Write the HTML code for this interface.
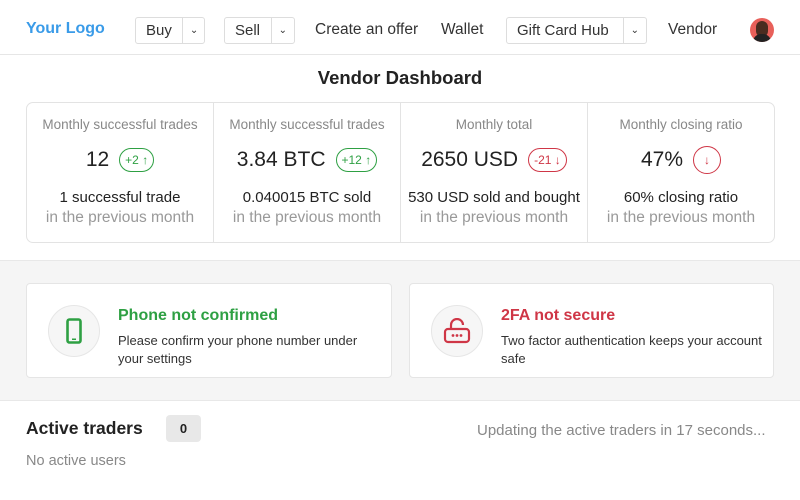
<!DOCTYPE html>
<html><head><style>
*{box-sizing:border-box;margin:0;padding:0}
body{width:800px;height:500px;background:#fff;font-family:"Liberation Sans",sans-serif;color:#222;position:relative;overflow:hidden}
.a{position:absolute}
.hdr{left:0;top:0;width:800px;height:55px;border-bottom:1px solid #e6e6e6}
.logo{left:26px;top:20px;color:#3a9be8;font-size:16px;font-weight:bold}
.nav{top:21px;font-size:15.5px;color:#333}
.dd{top:17px;height:27px;border:1px solid #ddd;border-radius:3px;display:flex;font-size:15px;color:#333}
.dd span{display:flex;align-items:center;padding:0 10px}
.dd .c{border-left:1px solid #ddd;padding:0 7px;font-size:10px}
.title{left:0;width:800px;top:67px;text-align:center;font-size:18.5px;font-weight:bold;color:#222}
.stats{left:26px;top:102px;width:749px;height:141px;border:1px solid #e3e3e3;border-radius:7px;display:flex}
.col{flex:1;text-align:center;border-right:1px solid #e3e3e3;position:relative}
.col:last-child{border-right:none}
.lab{margin-top:14px;font-size:13.5px;color:#888}
.val{margin-top:14px;font-size:21px;height:28px;display:flex;justify-content:center;align-items:center;gap:10px;color:#222}
.bd{font-size:12px;border:1.5px solid;border-radius:12px;padding:2px 5px;height:24px;display:flex;align-items:center}
.g{color:#2ea043;border-color:#2ea043}.r{color:#cf3646;border-color:#cf3646}
.s1{margin-top:15px;font-size:15px;color:#222}
.s2{margin-top:3px;font-size:15.5px;color:#999}
.gray{left:0;top:260px;width:800px;height:141px;background:#f5f5f5;border-top:1px solid #e8e8e8;border-bottom:1px solid #e8e8e8}
.card{top:283px;height:95px;background:#fff;border:1px solid #e5e5e5;border-radius:4px}
.ic{left:21px;top:21px;width:52px;height:52px;border-radius:50%;background:#f6f6f6;border:1px solid #e6e6e6;display:flex;align-items:center;justify-content:center}
.ct{left:91px;top:23px;font-size:16px;font-weight:bold}
.cd{left:91px;top:48px;font-size:13px;line-height:18px;color:#333;width:262px}
</style></head><body>
<div class="a hdr"></div>
<div class="a logo">Your Logo</div>
<div class="a dd" style="left:135px;width:70px"><span style="flex:1">Buy</span><span class="c">&#8964;</span></div>
<div class="a dd" style="left:224px;width:71px"><span style="flex:1">Sell</span><span class="c">&#8964;</span></div>
<div class="a nav" style="left:315px">Create an offer</div>
<div class="a nav" style="left:441px">Wallet</div>
<div class="a dd" style="left:506px;width:141px"><span style="flex:1">Gift Card Hub</span><span class="c">&#8964;</span></div>
<div class="a nav" style="left:668px">Vendor</div>
<div class="a" style="left:750px;top:18px;width:24px;height:24px;border-radius:50%;background:#e8605a;overflow:hidden"><div style="position:absolute;left:6px;top:3px;width:12px;height:16px;border-radius:6px;background:#4a2c20"></div><div style="position:absolute;left:3px;top:16px;width:18px;height:10px;border-radius:8px 8px 0 0;background:#222"></div></div>

<div class="a title">Vendor Dashboard</div>
<div class="a stats">
 <div class="col"><div class="lab">Monthly successful trades</div><div class="val">12 <span class="bd g">+2 ↑</span></div><div class="s1">1 successful trade</div><div class="s2">in the previous month</div></div>
 <div class="col"><div class="lab">Monthly successful trades</div><div class="val">3.84 BTC <span class="bd g">+12 ↑</span></div><div class="s1">0.040015 BTC sold</div><div class="s2">in the previous month</div></div>
 <div class="col"><div class="lab">Monthly total</div><div class="val">2650 USD <span class="bd r">-21 ↓</span></div><div class="s1">530 USD sold and bought</div><div class="s2">in the previous month</div></div>
 <div class="col"><div class="lab">Monthly closing ratio</div><div class="val">47% <span class="bd r" style="width:28px;height:28px;border-radius:50%;justify-content:center;padding:0">↓</span></div><div class="s1">60% closing ratio</div><div class="s2">in the previous month</div></div>
</div>

<div class="a gray"></div>
<div class="a card" style="left:26px;width:366px">
 <div class="a ic"><svg width="16" height="26" viewBox="0 0 16 26"><rect x="1.5" y="1.5" width="13" height="23" rx="2" fill="none" stroke="#2ea043" stroke-width="2.6"/><rect x="6" y="20.5" width="4" height="1.5" fill="#2ea043"/></svg></div>
 <div class="a ct" style="color:#2ea043">Phone not confirmed</div>
 <div class="a cd">Please confirm your phone number under your settings</div>
</div>
<div class="a card" style="left:409px;width:365px">
 <div class="a ic"><svg width="28" height="26" viewBox="0 0 28 26"><path d="M8 11V7a6 6 0 0 1 12 0" fill="none" stroke="#cf3646" stroke-width="2.2"/><rect x="2" y="11" width="24" height="13" rx="3" fill="none" stroke="#cf3646" stroke-width="2.2"/><circle cx="10" cy="17.5" r="1.4" fill="#cf3646"/><circle cx="14" cy="17.5" r="1.4" fill="#cf3646"/><circle cx="18" cy="17.5" r="1.4" fill="#cf3646"/></svg></div>
 <div class="a ct" style="color:#cf3646">2FA not secure</div>
 <div class="a cd">Two factor authentication keeps your account safe</div>
</div>

<div class="a" style="left:26px;top:418px;font-size:17.5px;font-weight:bold;color:#222">Active traders</div>
<div class="a" style="left:166px;top:415px;width:35px;height:27px;border-radius:4px;background:#e8e8e8;font-size:13px;font-weight:bold;display:flex;align-items:center;justify-content:center">0</div>
<div class="a" style="left:477px;top:422px;font-size:15px;color:#888;width:300px;white-space:nowrap">Updating the active traders in 17 seconds...</div>
<div class="a" style="left:26px;top:453px;font-size:14.5px;color:#888">No active users</div>
</body></html>
